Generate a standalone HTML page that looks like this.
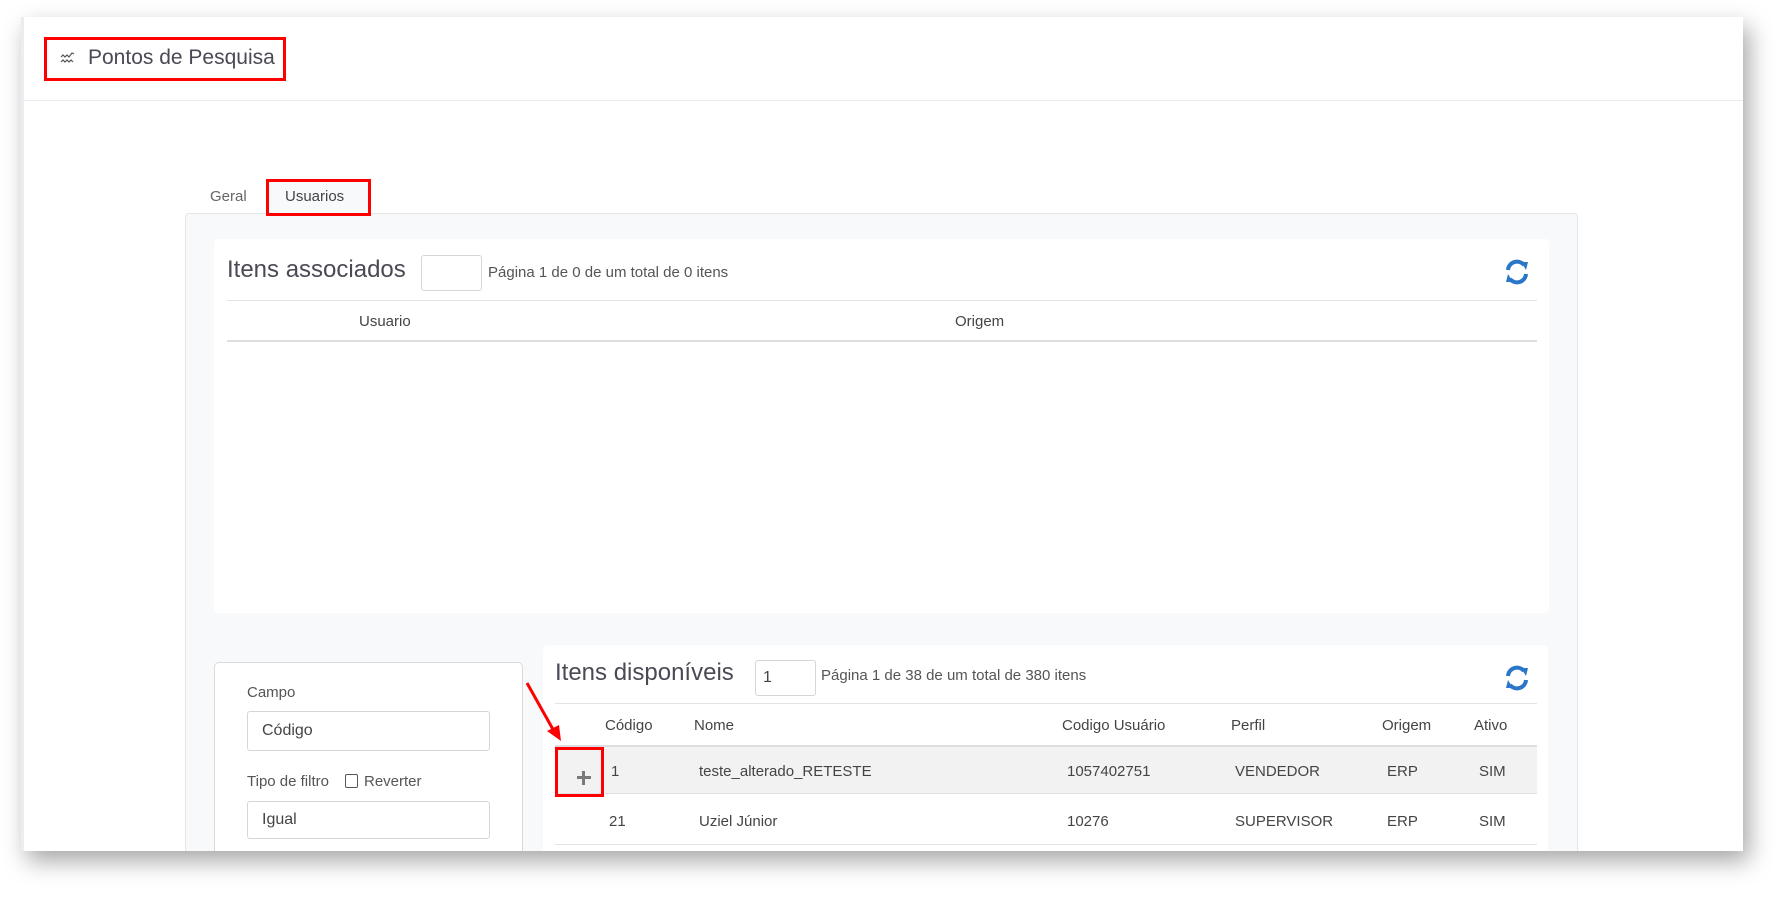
<!DOCTYPE html>
<html><head><meta charset="utf-8"><style>
*{box-sizing:border-box;margin:0;padding:0}
body{width:1791px;height:899px;background:#fff;position:relative;overflow:hidden;font-family:"Liberation Sans",sans-serif;color:#444}
.a{position:absolute}
.panel{left:21px;top:17px;width:1722px;height:834px;background:#fff;box-shadow:6px 10px 22px rgba(0,0,0,.35);border-left:3px solid #ececf2}
.clip{position:absolute;left:0;top:0;width:1743px;height:851px;overflow:hidden}
.t{position:absolute;white-space:nowrap;line-height:1}
.inp{position:absolute;background:#fff;border:1px solid #d4d6da;border-radius:3px}
.hline{position:absolute;height:1px;background:#e2e4e8}
.red{position:absolute;border:3px solid #f00}
</style></head><body>
<div class="a panel"></div>
<div class="clip">
<div class="hline" style="left:24px;top:100px;width:1719px;background:#e9eaef"></div>
<div class="red" style="left:44px;top:37px;width:242px;height:44px"></div>
<svg class="a" style="left:60px;top:51px" width="16" height="14" viewBox="0 0 16 14" fill="none" stroke="#555" stroke-width="1.2"><path d="M1 6l2-2 2 2 2-2 2 2 3-4 2 1"/><path d="M1 11l2-2 2 2 2-2 2 2 2-2 2 2"/></svg>
<div class="t" style="left:88px;top:47px;font-size:21px;color:#4a4a55">Pontos de Pesquisa</div>
<div class="a" style="left:185px;top:213px;width:1393px;height:650px;background:#f8f9fb;border:1px solid #e4e6ea;border-radius:4px"></div>
<div class="a" style="left:268px;top:181px;width:102px;height:34px;background:#f8f9fb;border:1px solid #e4e6ea;border-bottom:none"></div>
<div class="t" style="left:210px;top:189px;font-size:15px;color:#666">Geral</div>
<div class="red" style="left:266px;top:179px;width:105px;height:37px"></div>
<div class="t" style="left:285px;top:189px;font-size:15px;color:#444">Usuarios</div>
<div class="a" style="left:214px;top:239px;width:1335px;height:374px;background:#fff;border-radius:4px"></div>
<div class="t" style="left:227px;top:258px;font-size:24px;color:#4a4a55">Itens associados</div>
<div class="inp" style="left:421px;top:255px;width:61px;height:36px"></div>
<div class="t" style="left:488px;top:265px;font-size:15px;color:#555">Página 1 de 0 de um total de 0 itens</div>
<svg class="a" style="left:1502px;top:257px" width="30" height="30" viewBox="0 0 30 30" fill="none" stroke="#2a76c8" stroke-width="4"><path d="M6 13a9 9 0 0 1 16-5"/><path d="M24 17a9 9 0 0 1-16 5"/><path d="M19 5l7 0-2 8z" fill="#2a76c8" stroke="none"/><path d="M11 25l-7 0 2-8z" fill="#2a76c8" stroke="none"/></svg>
<div class="hline" style="left:227px;top:300px;width:1310px"></div>
<div class="t" style="left:359px;top:314px;font-size:15px;color:#444">Usuario</div>
<div class="t" style="left:955px;top:314px;font-size:15px;color:#444">Origem</div>
<div class="hline" style="left:227px;top:340px;width:1310px;height:2px;background:#dcdee2"></div>
<div class="a" style="left:214px;top:662px;width:309px;height:250px;background:#fff;border:1px solid #d8dade;border-radius:5px"></div>
<div class="t" style="left:247px;top:685px;font-size:15px;color:#555">Campo</div>
<div class="inp" style="left:247px;top:711px;width:243px;height:40px"></div>
<div class="t" style="left:262px;top:723px;font-size:16px;color:#444">Código</div>
<div class="t" style="left:247px;top:774px;font-size:15px;color:#555">Tipo de filtro</div>
<div class="a" style="left:345px;top:774px;width:13px;height:14px;border:1px solid #555;border-radius:2px;background:#fff"></div>
<div class="t" style="left:364px;top:774px;font-size:15px;color:#555">Reverter</div>
<div class="inp" style="left:247px;top:801px;width:243px;height:38px"></div>
<div class="t" style="left:262px;top:812px;font-size:16px;color:#444">Igual</div>
<div class="a" style="left:543px;top:645px;width:1005px;height:260px;background:#fff;border-radius:5px"></div>
<div class="t" style="left:555px;top:661px;font-size:24px;color:#4a4a55">Itens disponíveis</div>
<div class="inp" style="left:755px;top:660px;width:61px;height:36px"></div>
<div class="t" style="left:763px;top:670px;font-size:16px;color:#444">1</div>
<div class="t" style="left:821px;top:668px;font-size:15px;color:#555">Página 1 de 38 de um total de 380 itens</div>
<svg class="a" style="left:1502px;top:663px" width="30" height="30" viewBox="0 0 30 30" fill="none" stroke="#2a76c8" stroke-width="4"><path d="M6 13a9 9 0 0 1 16-5"/><path d="M24 17a9 9 0 0 1-16 5"/><path d="M19 5l7 0-2 8z" fill="#2a76c8" stroke="none"/><path d="M11 25l-7 0 2-8z" fill="#2a76c8" stroke="none"/></svg>
<div class="hline" style="left:555px;top:703px;width:982px"></div>
<div class="t" style="left:605px;top:718px;font-size:15px;color:#444">Código</div>
<div class="t" style="left:694px;top:718px;font-size:15px;color:#444">Nome</div>
<div class="t" style="left:1062px;top:718px;font-size:15px;color:#444">Codigo Usuário</div>
<div class="t" style="left:1231px;top:718px;font-size:15px;color:#444">Perfil</div>
<div class="t" style="left:1382px;top:718px;font-size:15px;color:#444">Origem</div>
<div class="t" style="left:1474px;top:718px;font-size:15px;color:#444">Ativo</div>
<div class="a" style="left:555px;top:745px;width:982px;height:49px;background:#f2f2f2;border-top:2px solid #dcdee2;border-bottom:1px solid #dfe1e5"></div>
<div class="t" style="left:611px;top:764px;font-size:15px">1</div>
<div class="t" style="left:699px;top:764px;font-size:15px">teste_alterado_RETESTE</div>
<div class="t" style="left:1067px;top:764px;font-size:15px">1057402751</div>
<div class="t" style="left:1235px;top:764px;font-size:15px">VENDEDOR</div>
<div class="t" style="left:1387px;top:764px;font-size:15px">ERP</div>
<div class="t" style="left:1479px;top:764px;font-size:15px">SIM</div>
<div class="t" style="left:609px;top:814px;font-size:15px">21</div>
<div class="t" style="left:699px;top:814px;font-size:15px">Uziel Júnior</div>
<div class="t" style="left:1067px;top:814px;font-size:15px">10276</div>
<div class="t" style="left:1235px;top:814px;font-size:15px">SUPERVISOR</div>
<div class="t" style="left:1387px;top:814px;font-size:15px">ERP</div>
<div class="t" style="left:1479px;top:814px;font-size:15px">SIM</div>
<div class="hline" style="left:555px;top:844px;width:982px"></div>
<div class="red" style="left:555px;top:747px;width:49px;height:50px"></div>
<div class="a" style="left:577px;top:776px;width:14px;height:3px;background:#7a7a7a"></div>
<div class="a" style="left:582px;top:771px;width:3px;height:14px;background:#7a7a7a"></div>
<svg class="a" style="left:515px;top:675px" width="60" height="75" viewBox="0 0 60 75"><path d="M12 8L40 58" stroke="#f00" stroke-width="3"/><path d="M46 66L32 56 44 50z" fill="#f00"/></svg>
</div>
</body></html>
